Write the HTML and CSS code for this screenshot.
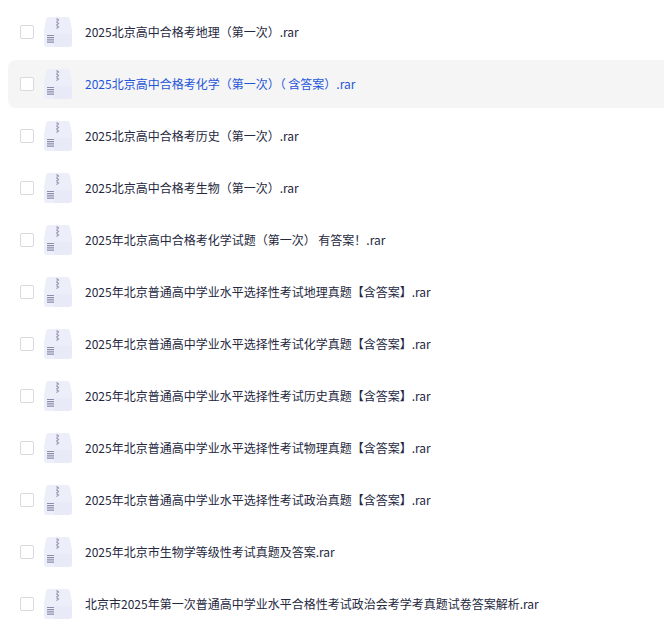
FILE: index.html
```html
<!DOCTYPE html>
<html lang="zh-CN">
<head>
    <meta charset="UTF-8" />
    <title>文件列表</title>
    <link rel="stylesheet" href="styles.css">
</head>
<body>
    <svg class="defs" width="0" height="0">
        <symbol id="rar" viewBox="0 0 28 30">
            <path d="M2 3q0-3 3-3h18q3 0 3 3l2 10v14q0 3-3 3H3q-3 0-3-3V13z" fill="#eceef9"/>
            <path d="M10 17h17q1 0 1 1v9q0 3-3 3H10z" fill="#e8eaf7"/>
            <path d="M12.500 1.500l2 1.500-2 1.500M12.500 5l2 1.500-2 1.500M12.500 8.500l2 1.500-2 1.500" fill="none" stroke="#8e90ad" stroke-width="1.100"/>
            <path d="M3 18.500h7M3 20.700h7M3 22.900h7M3 25.100h7" stroke="#8a8cab" stroke-width="1.200"/>
        </symbol>
    </svg>
    <ul class="file-list">
        <li class="file-row"><span class="check"></span><svg class="file-icon"><use href="#rar"/></svg><span class="file-name">2025北京高中合格考地理（第一次）.rar</span></li>
        <li class="file-row active"><span class="check"></span><svg class="file-icon"><use href="#rar"/></svg><span class="file-name">2025北京高中合格考化学（第一次）（ 含答案）.rar</span></li>
        <li class="file-row"><span class="check"></span><svg class="file-icon"><use href="#rar"/></svg><span class="file-name">2025北京高中合格考历史（第一次）.rar</span></li>
        <li class="file-row"><span class="check"></span><svg class="file-icon"><use href="#rar"/></svg><span class="file-name">2025北京高中合格考生物（第一次）.rar</span></li>
        <li class="file-row"><span class="check"></span><svg class="file-icon"><use href="#rar"/></svg><span class="file-name">2025年北京高中合格考化学试题（第一次） 有答案！.rar</span></li>
        <li class="file-row"><span class="check"></span><svg class="file-icon"><use href="#rar"/></svg><span class="file-name">2025年北京普通高中学业水平选择性考试地理真题【含答案】.rar</span></li>
        <li class="file-row"><span class="check"></span><svg class="file-icon"><use href="#rar"/></svg><span class="file-name">2025年北京普通高中学业水平选择性考试化学真题【含答案】.rar</span></li>
        <li class="file-row"><span class="check"></span><svg class="file-icon"><use href="#rar"/></svg><span class="file-name">2025年北京普通高中学业水平选择性考试历史真题【含答案】.rar</span></li>
        <li class="file-row"><span class="check"></span><svg class="file-icon"><use href="#rar"/></svg><span class="file-name">2025年北京普通高中学业水平选择性考试物理真题【含答案】.rar</span></li>
        <li class="file-row"><span class="check"></span><svg class="file-icon"><use href="#rar"/></svg><span class="file-name">2025年北京普通高中学业水平选择性考试政治真题【含答案】.rar</span></li>
        <li class="file-row"><span class="check"></span><svg class="file-icon"><use href="#rar"/></svg><span class="file-name">2025年北京市生物学等级性考试真题及答案.rar</span></li>
        <li class="file-row"><span class="check"></span><svg class="file-icon"><use href="#rar"/></svg><span class="file-name">北京市2025年第一次普通高中学业水平合格性考试政治会考学考真题试卷答案解析.rar</span></li>
    </ul>
</body>
</html>
```
FILE: styles.css
```css
html, body {
    margin: 0;
    padding: 0;
    background: #fff;
    overflow: hidden;
}

body {
    height: 632px;
    font-family: "Noto Sans CJK SC", "Noto Sans", sans-serif;
    font-size: 12px;
    color: #25283e;
}

.defs {
    position: absolute;
}

/* the rows run on past the right edge of the window */
.file-list {
    list-style: none;
    margin: 0 -12px 0 0;
    padding: 8px 0 0 8px;
}

.file-row {
    display: flex;
    align-items: center;
    height: 48px;
    margin-bottom: 4px;
    padding-left: 12px;
    border-radius: 8px;
}

.file-row.active {
    background: #f5f5f6;
}

.file-row.active .file-name {
    color: #1f55d8;
}

.check {
    width: 12px;
    height: 12px;
    border: 1px solid #d9d9de;
    border-radius: 2px;
    background: #fff;
    flex: none;
}

.file-icon {
    width: 28px;
    height: 30px;
    margin-left: 10px;
    flex: none;
}

.file-name {
    margin-left: 13px;
    padding-bottom: 2px;
    white-space: nowrap;
}
```
